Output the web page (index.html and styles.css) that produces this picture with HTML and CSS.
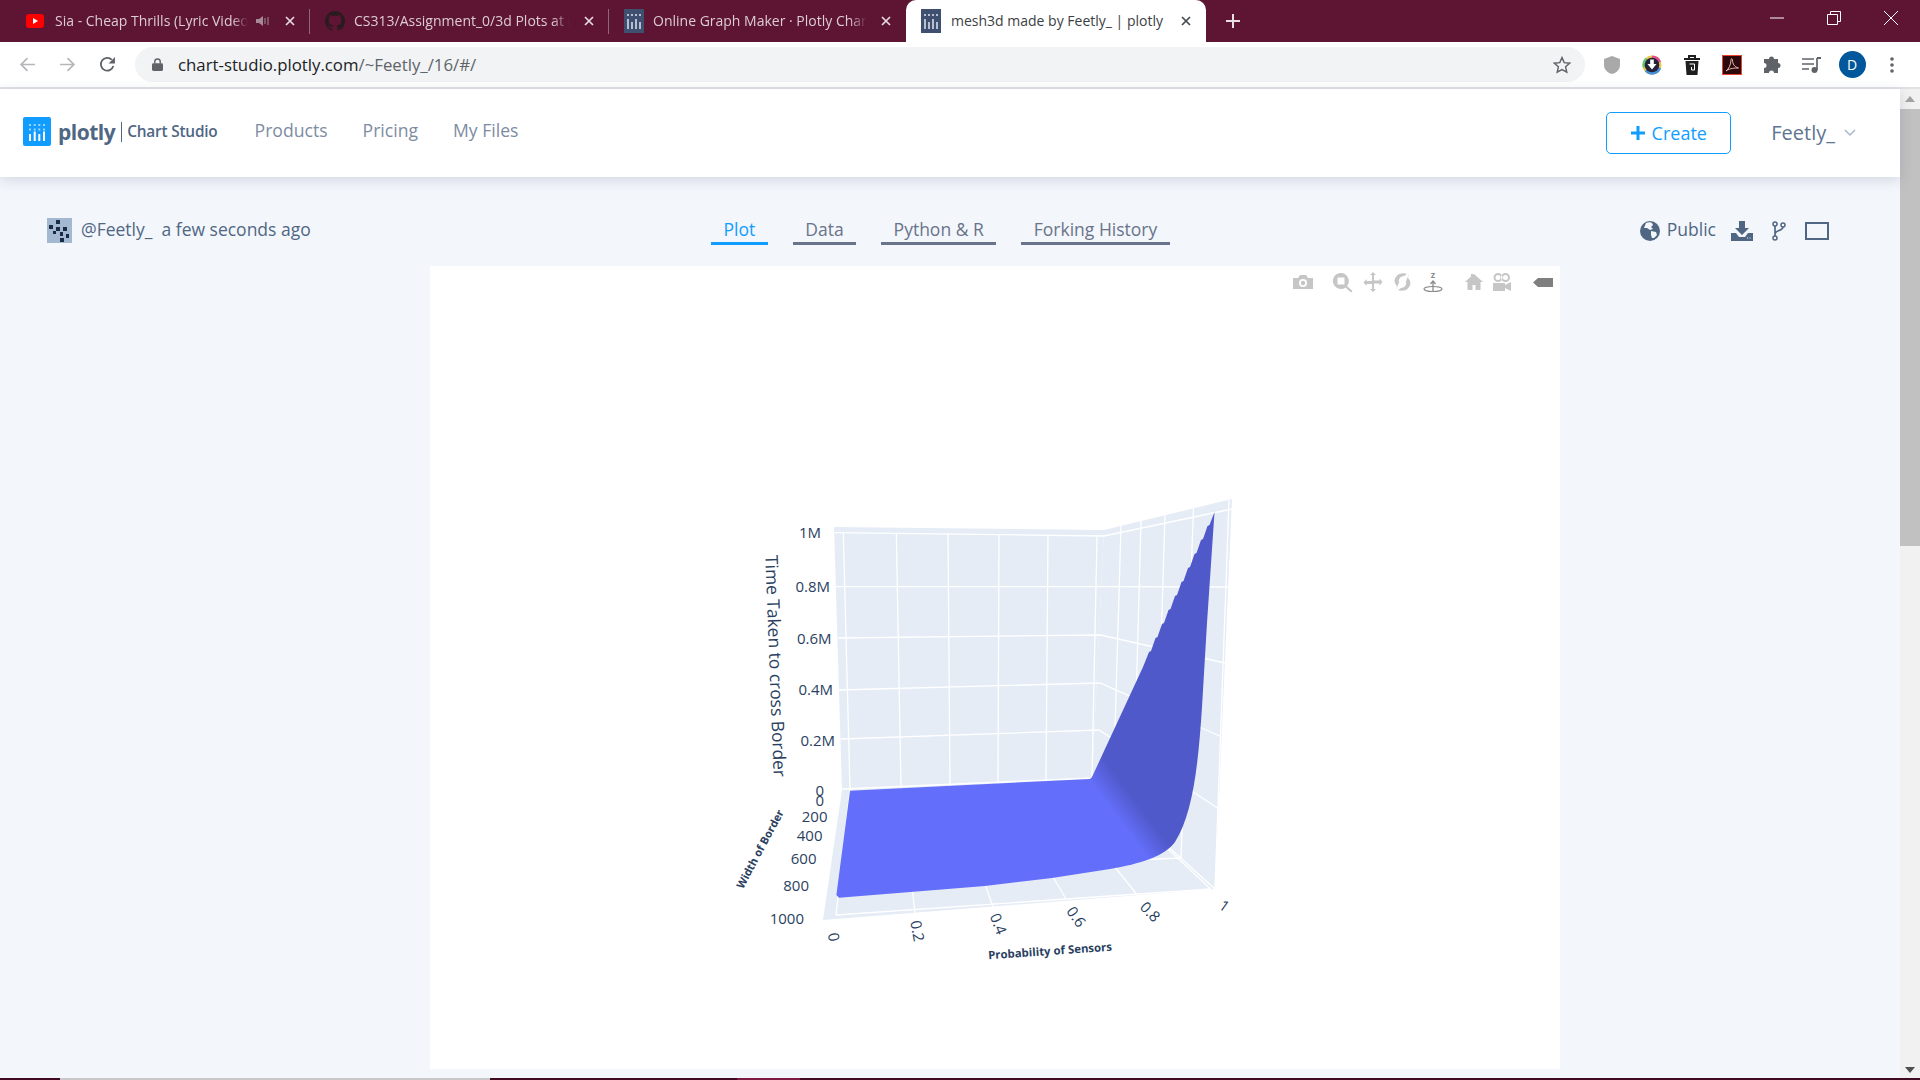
FILE: index.html
```html
<!DOCTYPE html>
<html lang="en">
<head>
<meta charset="utf-8">
<title>mesh3d made by Feetly_ | plotly</title>
<link rel="stylesheet" href="styles.css">
</head>
<body>
<div class="window">
  <div class="tabstrip">
    <div class="tab">
      <svg class="favicon" viewBox="0 0 18 14"><rect width="18" height="14" rx="3" fill="#f00"/><path d="M7 4l5 3-5 3z" fill="#fff"/></svg>
      <span class="tab-title">Sia - Cheap Thrills (Lyric Video)</span>
      <svg class="tab-audio" viewBox="0 0 14 12"><path d="M0 4h3l4-3v10L3 8H0z" fill="#a58a96"/><path d="M9 3v6M12 2v8" stroke="#8a6577" stroke-width="1.5"/></svg>
      <svg class="tab-close" viewBox="0 0 10 10"><path d="M1 1l8 8M9 1l-8 8" stroke="#e6dbe0" stroke-width="1.7"/></svg>
    </div>
    <div class="tab tab-sep">
      <svg class="favicon fav-gh" viewBox="0 0 16 16"><path fill="#2a1b20" d="M8 0C3.58 0 0 3.58 0 8c0 3.54 2.29 6.53 5.47 7.59.4.07.55-.17.55-.38 0-.19-.01-.82-.01-1.49-2.01.37-2.53-.49-2.69-.94-.09-.23-.48-.94-.82-1.13-.28-.15-.68-.52-.01-.53.63-.01 1.08.58 1.23.82.72 1.21 1.87.87 2.33.66.07-.52.28-.87.51-1.07-1.78-.2-3.64-.89-3.64-3.95 0-.87.31-1.59.82-2.15-.08-.2-.36-1.02.08-2.12 0 0 .67-.21 2.2.82.64-.18 1.32-.27 2-.27.68 0 1.36.09 2 .27 1.53-1.04 2.2-.82 2.2-.82.44 1.1.16 1.92.08 2.12.51.56.82 1.27.82 2.15 0 3.07-1.87 3.75-3.65 3.95.29.25.54.73.54 1.48 0 1.07-.01 1.93-.01 2.2 0 .21.15.46.55.38A8.013 8.013 0 0016 8c0-4.42-3.58-8-8-8z"/></svg>
      <span class="tab-title">CS313/Assignment_0/3d Plots at master</span>
      <svg class="tab-close" viewBox="0 0 10 10"><path d="M1 1l8 8M9 1l-8 8" stroke="#e6dbe0" stroke-width="1.7"/></svg>
    </div>
    <div class="tab tab-sep tab-third">
      <svg class="favicon fav-plotly" viewBox="0 0 20 24"><rect width="20" height="24" fill="#3f4f70"/><path d="M4 5v2M8 5v2M12 5v2M16 5v2M4 10v10M8 13v7M12 10v10M16 13v7" stroke="#dfe6ef" stroke-width="1.500"/></svg>
      <span class="tab-title">Online Graph Maker · Plotly Chart Studio</span>
      <svg class="tab-close" viewBox="0 0 10 10"><path d="M1 1l8 8M9 1l-8 8" stroke="#e6dbe0" stroke-width="1.7"/></svg>
    </div>
    <div class="tab tab-active">
      <svg class="favicon fav-plotly" viewBox="0 0 20 24"><rect width="20" height="24" fill="#3f4f70"/><path d="M4 5v2M8 5v2M12 5v2M16 5v2M4 10v10M8 13v7M12 10v10M16 13v7" stroke="#dfe6ef" stroke-width="1.500"/></svg>
      <span class="tab-title tab-title-active">mesh3d made by Feetly_ | plotly</span>
      <svg class="tab-close" viewBox="0 0 10 10"><path d="M1 1l8 8M9 1l-8 8" stroke="#45494d" stroke-width="1.700"/></svg>
    </div>
    <svg class="newtab" viewBox="0 0 14 14"><path d="M7 0v14M0 7h14" stroke="#e8dfe3" stroke-width="2"/></svg>
    <div class="winctrls">
      <svg class="winbtn" viewBox="0 0 14 14"><path d="M0 7h14" stroke="#fff" stroke-width="1"/></svg>
      <svg class="winbtn" viewBox="0 0 14 14"><path d="M.5 3.500h10v10H.5zM3.500 3.500V.5h10v10h-3" fill="none" stroke="#fff" stroke-width="1"/></svg>
      <svg class="winbtn" viewBox="0 0 14 14"><path d="M0 0l14 14M14 0L0 14" stroke="#fff" stroke-width="1"/></svg>
    </div>
  </div>

  <div class="toolbar">
    <div class="navslot"><svg class="navicon" viewBox="0 0 16 16"><path d="M15 8H2M8 2L2 8l6 6" fill="none" stroke="#b4b6b9" stroke-width="1.600"/></svg></div>
    <div class="navslot"><svg class="navicon" viewBox="0 0 16 16"><path d="M1 8h13M8 2l6 6-6 6" fill="none" stroke="#b4b6b9" stroke-width="1.600"/></svg></div>
    <div class="navslot"><svg class="navicon" viewBox="0 0 16 16"><path d="M13.500 9.500A6 6 0 1 1 12 3.500" fill="none" stroke="#5f6368" stroke-width="1.700"/><path d="M15 1v6H9z" fill="#5f6368"/></svg></div>
    <div class="omnibox">
      <svg class="lock" viewBox="0 0 12 14"><path d="M3 6V4a3 3 0 0 1 6 0v2" fill="none" stroke="#5f6368" stroke-width="1.500"/><rect y="5.500" width="12" height="8.500" rx="1.500" fill="#5f6368"/></svg>
      <span class="url">chart-studio.plotly.com<span class="url-path">/~Feetly_/16/#/</span></span>
      <svg class="star" viewBox="0 0 20 20"><path d="M10 1.800l2.500 5.600 6 .6-4.500 4 1.300 6L10 15l-5.300 3 1.300-6-4.500-4 6-.6z" fill="none" stroke="#5f6368" stroke-width="1.600"/></svg>
    </div>
    <div class="extensions">
      <div class="extslot"><svg class="exticon" viewBox="0 0 20 20"><path d="M10 1l8 3v6c0 5-4 8-8 9-4-1-8-4-8-9V4z" fill="#a9a9a9"/></svg></div>
      <div class="extslot"><svg class="exticon" viewBox="0 0 22 22"><circle cx="11" cy="11" r="10.500" fill="#e6c84a"/><path d="M11 .5a10.500 10.500 0 0 1 10 7L11 11z" fill="#e0518c"/><path d="M21 14.500A10.500 10.500 0 0 1 3 18l8-7z" fill="#4a90d9"/><path d="M1 14a10.500 10.500 0 0 1 3-11l7 8z" fill="#5fc46b"/><circle cx="11" cy="11" r="8" fill="#26223a"/><path d="M9 5h4v5h3l-5 6-5-6h3z" fill="#fff"/></svg></div>
      <div class="extslot"><svg class="exticon" viewBox="0 0 18 20"><path d="M1 4h16M6 3V1h6v2" fill="none" stroke="#1f1f1f" stroke-width="2"/><path d="M2.500 6h13l-1 14h-11z" fill="#1f1f1f"/><path d="M6.500 9h5v6h-3v-3" fill="none" stroke="#fff" stroke-width="1"/></svg></div>
      <div class="extslot"><svg class="exticon" viewBox="0 0 20 20"><rect x=".5" y=".5" width="19" height="19" fill="#2c0a0c" stroke="#e8432e"/><path d="M4 16c3-2 5-7 5-11 0-2 1.500-1.500 1.500 0 0 4 2 7 6 8-4 0-8 0-12.500 3z" fill="none" stroke="#e9b7b0" stroke-width="1"/></svg></div>
      <div class="extslot"><svg class="exticon" viewBox="0 0 20 20"><path d="M7 4a2.500 2.500 0 0 1 5 0h4v4a2.500 2.500 0 0 1 0 5v5h-4a2.500 2.500 0 0 0-5 0H2v-5a2.500 2.500 0 0 0 0-5V4z" fill="#5f6368"/></svg></div>
      <div class="extslot"><svg class="exticon" viewBox="0 0 20 18"><path d="M0 3h12M0 8h12M0 13h7" stroke="#5f6368" stroke-width="1.700"/><path d="M15 2v12" stroke="#5f6368" stroke-width="1.700"/><path d="M15 2h4" stroke="#5f6368" stroke-width="2"/><circle cx="12.500" cy="14" r="3" fill="#5f6368"/></svg></div>
      <div class="extslot"><span class="avatar-d">D</span></div>
      <div class="extslot"><svg class="menu-dots" viewBox="0 0 4 16"><circle cx="2" cy="2" r="1.800" fill="#5f6368"/><circle cx="2" cy="8" r="1.800" fill="#5f6368"/><circle cx="2" cy="14" r="1.800" fill="#5f6368"/></svg></div>
    </div>
  </div>

  <div class="viewport">
    <div class="page">
      <header class="site-header">
        <div class="brand">
          <svg class="logo-mark" viewBox="0 0 28 29"><rect width="28" height="29" rx="2" fill="#119dff"/><path d="M7 7v2M11.700 7v2M16.300 7v2M21 7v2M7 11.500v2M11.700 11.500v2M16.300 11.500v2M21 11.500v2" stroke="#9bd6ff" stroke-width="2"/><path d="M7 17v7M11.700 14.500V24M16.300 17v7M21 14.500V24" stroke="#fff" stroke-width="2"/></svg>
          <span class="logo-word">plotly</span>
          <span class="logo-bar"></span>
          <span class="logo-sub">Chart Studio</span>
        </div>
        <nav class="site-nav">
          <a class="site-link">Products</a>
          <a class="site-link">Pricing</a>
          <a class="site-link">My Files</a>
        </nav>
        <button class="create-btn"><svg class="create-plus" viewBox="0 0 14 14"><path d="M7 0v14M0 7h14" stroke="#119dff" stroke-width="3"/></svg>Create</button>
        <span class="user-name">Feetly_</span>
        <svg class="user-chev" viewBox="0 0 12 8"><path d="M1 1l5 5 5-5" fill="none" stroke="#a9b7ca" stroke-width="1.500"/></svg>
      </header>

      <div class="subbar">
        <div class="owner">
          <svg class="owner-pic" viewBox="0 0 25 25" shape-rendering="crispEdges"><rect width="25" height="25" fill="#a3b9d1"/><path d="M2 7h3.500v3.500H2zM9 2h3.500v3.500H9zM9 9h3.500v3.500H9zM5.500 12.500H9V16H5.500zM16 9h3.500v3.500H16zM12.500 14H16v3.500h-3.500zM19 16h3v3.500h-3zM13 20h4v3.500h-4z" fill="#1d2b42"/></svg>
          <span class="owner-name">@Feetly_</span>
          <span class="owner-time">a few seconds ago</span>
        </div>
        <div class="plot-tabs">
          <span class="plot-tab plot-tab-on">Plot</span>
          <span class="plot-tab">Data</span>
          <span class="plot-tab">Python &amp; R</span>
          <span class="plot-tab">Forking History</span>
        </div>
        <div class="plot-actions">
          <svg class="act-globe" viewBox="0 0 20 20"><circle cx="10" cy="10" r="10" fill="#506784"/><path d="M6 2c2-1 5-1 6 0l1 2-2 2 2 2-3 1-3-2-3 0zM11 10l5 1 1 3-3 3-2 0-1-3z" fill="#f3f6fb"/></svg>
          <span class="act-public">Public</span>
          <svg class="act-dl" viewBox="0 0 22 20"><path d="M8 0h6v7h4l-7 7-7-7h4z" fill="#506784"/><path d="M0 12h5l3 4h6l3-4h5v8H0z" fill="#506784"/><path d="M16 17h1M18.500 17h1" stroke="#f3f6fb"/></svg>
          <svg class="act-fork" viewBox="0 0 14 20"><circle cx="3" cy="3" r="2" fill="none" stroke="#506784" stroke-width="1.500"/><circle cx="11" cy="4" r="2" fill="none" stroke="#506784" stroke-width="1.500"/><circle cx="3" cy="17" r="2" fill="none" stroke="#506784" stroke-width="1.500"/><path d="M3 5v10M11 6c0 4-8 3-8 7" fill="none" stroke="#506784" stroke-width="1.700"/></svg>
          <span class="act-box"></span>
        </div>
      </div>

      <div class="plot-card">
        <svg class="plot-svg" viewBox="430 266 1130 803">
          <g class="modebar">
            <path d="M1293 278h5l2-3h6l2 3h5v11h-20z"/><circle cx="1303" cy="283" r="4" fill="#fff"/><circle cx="1303" cy="283" r="2.200"/>
            <path fill-rule="evenodd" d="M1341 273a8 8 0 0 1 6 13l5.500 5-1.500 1.500-5.500-5A8 8 0 1 1 1341 273zM1337.500 277.500v7h7v-7z"/>
            <path d="M1373 272l3 3h-2v5.500h5.500v-2l3 3.500-3 3.500v-2H1374v5.500h2l-3 3-3-3h2V284h-5.500v2l-3-3.500 3-3.500v2h5.500V275h-2z"/>
            <path d="M1396 290l1-4c-3-3-4-8 2-12 3-1 6-1 8 0l-3 2c-3 0-6 3-5 6l1-2zM1409 274l-1 4c3 3 4 8-2 12-3 1-6 1-8 0l3-2c3 0 6-3 5-6l-1 2z"/>
            <g class="orbit"><text x="1433" y="278" class="orbit-z">z</text><path d="M1433 291v-10M1430.500 284l2.500-3 2.500 3" fill="none" stroke="#8c8c8c" stroke-width="1.300"/><ellipse cx="1433" cy="289" rx="9" ry="2.500" fill="none" stroke="#8c8c8c" stroke-width="1.200"/></g>
            <path d="M1474 274l9 8h-2.500v8h-5v-5h-3v5h-5v-8h-2.500l6-5.500V274h2v1z"/>
            <path d="M1493 283h12v2l6-3v9l-6-3v3h-12z"/><path fill-rule="evenodd" d="M1498 273a4.500 4.500 0 1 1 0 9 4.500 4.500 0 0 1 0-9zM1498 275a2.500 2.500 0 1 0 0 5 2.500 2.500 0 0 0 0-5zM1505.500 273a4.500 4.500 0 1 1 0 9 4.500 4.500 0 0 1 0-9zM1505.500 275a2.500 2.500 0 1 0 0 5 2.500 2.500 0 0 0 0-5z"/>
            <path class="mode-tag" d="M1538 278h15v9h-15l-5-4.500z"/>
          </g>

          <polygon class="wall" points="834,527 1104,530 1092,778 842,790"/>
          <polygon class="wall" points="1104,530 1232,499 1215,889 1092,778"/>
          <polygon class="wall" points="842,790 1092,778 1215,889 823,920"/>

          <g class="grid">
            <path d="M834 532.700L1104 536L1232 509"/>
            <path d="M836 586.700L1102 586.700L1229 587"/>
            <path d="M838 638L1100.500 635L1225 663"/>
            <path d="M839 690L1100 683L1222 737"/>
            <path d="M840.500 739L1099 730L1219 809"/>
            <path d="M842 789L1092 778L1215 889"/>
            <path d="M843.300 532.700L850 789"/>
            <path d="M896.300 533L901 787"/>
            <path d="M948 534L950 785"/>
            <path d="M999 535L998 782"/>
            <path d="M1048 535.500L1046 780"/>
            <path d="M1097 536L1092 778"/>
            <path d="M1121 526L1113 797"/>
            <path d="M1141 521L1133 815"/>
            <path d="M1165 515L1155 835"/>
            <path d="M1193.500 508L1181 858"/>
            <path d="M1229 500L1215 889"/>
            <path d="M836 915L850 789"/>
            <path d="M915 913L901 787"/>
            <path d="M993 906.700L950 785"/>
            <path d="M1066 899L998 782"/>
            <path d="M1138 896L1046 780"/>
            <path d="M1210.700 889L1092 778"/>
            <path d="M836 915L1210.700 889"/>
            <path d="M1181 858L842 872"/>
          </g>

          <defs>
            <linearGradient id="surfaceShade" gradientUnits="userSpaceOnUse" x1="1118" y1="818" x2="1138" y2="803">
              <stop offset="0" stop-color="#636efa"/>
              <stop offset="1" stop-color="#5059c9"/>
            </linearGradient>
          </defs>
          <path fill="url(#surfaceShade)" d="M850 790.700L1090 779L1092 777L1143 667L1149 652L1151 651L1155.500 638L1157.500 637L1162 624L1164 623L1168.500 610L1170.500 609L1175 596L1177 595L1181.500 582L1183.500 581L1188 568L1190 567L1194.500 554L1196.500 553L1201 540L1203 539L1207.500 526L1209.500 525L1214.500 512L1207 623L1202 707C1198 770 1192 815 1175 842C1165 856 1140 864 1110 869L1052 878L985 886L839 897.700L836.400 895z"/>

          <g class="ticks ticks-end">
            <text x="821" y="538">1M</text>
            <text x="830" y="592">0.8M</text>
            <text x="831.500" y="644">0.6M</text>
            <text x="833" y="695">0.4M</text>
            <text x="835" y="746">0.2M</text>
            <text x="824" y="796">0</text>
            <text x="824" y="806">0</text>
            <text x="827.500" y="822">200</text>
            <text x="822.500" y="841">400</text>
            <text x="816.500" y="864">600</text>
            <text x="809" y="891">800</text>
            <text x="804" y="924">1000</text>
          </g>
          <g class="ticks ticks-mid">
            <text transform="translate(833.500 937) rotate(80)" y="5">0</text>
            <text transform="translate(917 931) rotate(80)" y="5">0.2</text>
            <text transform="translate(998 924) rotate(68)" y="5">0.4</text>
            <text transform="translate(1076 917) rotate(55)" y="5">0.6</text>
            <text transform="translate(1150 912) rotate(45)" y="5">0.8</text>
            <text transform="translate(1224 906) rotate(35)" y="5">1</text>
          </g>
          <text class="axis-title axis-z" transform="translate(774.500 666) rotate(87.800)" y="5">Time Taken to cross Border</text>
          <text class="axis-title axis-small axis-w" transform="translate(760 849) rotate(-62)" y="4">Width of Border</text>
          <text class="axis-title axis-small" transform="translate(1050 951) rotate(-4)" y="4">Probability of Sensors</text>
        </svg>
      </div>
    </div>
    <div class="scrollbar">
      <svg class="scroll-arrow" viewBox="0 0 20 20"><path d="M5 13l5-6 5 6z" fill="#a3a3a3"/></svg>
      <div class="scroll-thumb"></div>
      <div class="scroll-rest"></div>
      <svg class="scroll-arrow" viewBox="0 0 20 20"><path d="M5 7l5 6 5-6z" fill="#505050"/></svg>
    </div>
  </div>

  <div class="taskbar-edge">
    <span class="edge edge-a"></span>
    <span class="edge edge-b"></span>
    <span class="edge edge-a edge-c"></span>
    <span class="edge edge-d"></span>
    <span class="edge edge-a edge-e"></span>
  </div>
</div>
</body>
</html>
```
FILE: styles.css
```css
* { box-sizing: border-box; }
html, body { margin: 0; padding: 0; height: 100%; overflow: hidden; }
body { font-family: "Open Sans", "Liberation Sans", sans-serif; background: #f3f6fb; }
.window { position: relative; width: 1920px; height: 1080px; display: flex; flex-direction: column; }

/* tab strip */
.tabstrip { height: 42px; background: #5e1433; display: flex; align-items: stretch; padding-left: 11px; }
.tab { width: 299px; height: 42px; display: flex; align-items: center; padding: 0 12px 0 15px; position: relative; }
.tab-sep::before { content: ""; position: absolute; left: -1px; top: 9px; height: 25px; width: 1px; background: #8f6878; }
.tab-third { width: 297px; }
.tab-active { width: 300px; background: #fff; border-radius: 10px 10px 0 0; }
.favicon { width: 18px; height: 14px; flex: none; }
.fav-gh { width: 20px; height: 20px; }
.fav-plotly { width: 20px; height: 24px; }
.tab-title { flex: 1; min-width: 0; margin: -1px 0 0 11px; white-space: nowrap; overflow: hidden; font-size: 14px; line-height: 20px; color: #dccdd3; -webkit-mask-image: linear-gradient(90deg, #000 92%, transparent); mask-image: linear-gradient(90deg, #000 92%, transparent); }
.tab-sep .tab-title { margin-left: 9px; margin-right: 5px; }
.tab-title-active { color: #3c4043; -webkit-mask-image: none; mask-image: none; margin-left: 10px; }
.tab-audio { width: 14px; height: 12px; flex: none; margin: 0 6px 0 8px; }
.tab-close { width: 10px; height: 10px; flex: none; margin-left: 9px; margin-right: 3px; }
.newtab { width: 14px; height: 14px; align-self: center; margin-left: 20px; }
.winctrls { margin-left: auto; display: flex; align-items: flex-start; padding-right: 22px; gap: 43px; padding-top: 11px; }
.winbtn { width: 14px; height: 14px; display: block; }

/* toolbar */
.toolbar { height: 47px; background: #fff; border-bottom: 2px solid #dfe1e5; padding: 5px 8px 0 7px; display: flex; align-items: flex-start; }
.navslot { width: 40px; height: 35px; display: flex; align-items: center; justify-content: center; flex: none; }
.navicon { width: 17px; height: 17px; }
.omnibox { width: 1450px; height: 35px; margin-left: 8px; flex: none; background: #f1f3f4; border-radius: 18px; display: flex; align-items: center; padding: 0 14px 0 17px; }
.lock { width: 11px; height: 13px; flex: none; }
.url { margin-left: 15px; font-size: 16.800px; color: #202124; white-space: nowrap; }
.url-path { color: #5f6368; }
.star { width: 18px; height: 18px; margin-left: auto; }
.extensions { display: flex; margin-left: 7px; }
.extslot { width: 40px; height: 35px; display: flex; align-items: center; justify-content: center; }
.exticon { width: 20px; height: 20px; }
.avatar-d { width: 27px; height: 27px; border-radius: 50%; background: #01579b; color: #fff; font-size: 14px; display: flex; align-items: center; justify-content: center; }
.menu-dots { width: 4px; height: 16px; }

/* page */
.viewport { flex: 1; min-height: 0; display: flex; }
.page { width: 1900px; flex: none; background: #f3f6fb; position: relative; }
.site-header { height: 88px; background: #fff; box-shadow: 0 3px 12px rgba(60, 80, 110, .18); display: flex; align-items: center; padding-left: 23px; position: relative; }
.brand { display: flex; align-items: center; margin-top: -3px; }
.logo-mark { width: 28px; height: 29px; flex: none; }
.logo-word { margin-left: 7px; font-size: 21px; font-weight: 700; color: #506784; letter-spacing: -.5px; }
.logo-bar { width: 1px; height: 20px; background: #506784; margin-left: 6px; }
.logo-sub { margin-left: 5px; font-size: 15.400px; font-weight: 600; color: #506784; letter-spacing: -.2px; }
.site-nav { display: flex; gap: 35px; margin-left: 37px; margin-top: -6px; }
.site-link { font-size: 17.600px; color: #7d8ca3; }
.create-btn { margin-left: auto; width: 125px; height: 42px; border: 1px solid #119dff; border-radius: 5px; background: #fff; color: #119dff; font: 400 18px "Open Sans", sans-serif; display: flex; align-items: center; justify-content: center; gap: 7px; padding: 0; }
.create-plus { width: 14px; height: 14px; }
.user-name { margin: -2px 0 0 40px; font-size: 20px; color: #607591; }
.user-chev { width: 12px; height: 8px; margin-left: 9px; margin-right: 44px; }

.subbar { height: 89px; display: flex; align-items: flex-start; padding-top: 41px; position: relative; }
.owner { display: flex; align-items: center; padding-left: 47px; width: 711px; flex: none; color: #506784; font-size: 17.500px; height: 25px; }
.owner-pic { width: 25px; height: 25px; flex: none; }
.owner-name { margin: -4px 0 0 9px; }
.owner-time { margin: -4px 0 0 9px; }
.plot-tabs { display: flex; gap: 25px; margin-top: -1px; }
.plot-tab { font-size: 17.500px; line-height: 25px; color: #69738a; padding: 0 12.500px; border-bottom: 3px solid #69738a; }
.plot-tab-on { color: #119dff; border-color: #119dff; }
.plot-actions { margin-left: auto; display: flex; align-items: center; height: 25px; padding-right: 71px; color: #506784; font-size: 17.500px; }
.act-globe { width: 20px; height: 20px; }
.act-public { margin-left: 7px; margin-top: -3px; }
.act-dl { width: 22px; height: 20px; margin-left: 15px; }
.act-fork { width: 14px; height: 20px; margin-left: 19px; }
.act-box { width: 24px; height: 18px; border: 2px solid #506784; margin-left: 19px; }

.plot-card { width: 1130px; height: 803px; margin-left: 430px; background: #fff; }
.plot-svg { display: block; width: 1130px; height: 803px; font-family: "Open Sans", sans-serif; }
.modebar { fill: #c6c6c6; }
.mode-tag { fill: #7f7f7f; }
.orbit-z { font-size: 9px; font-weight: 700; text-anchor: middle; fill: #8c8c8c; }
.wall { fill: #e5ecf6; }
.grid path { fill: none; stroke: #fff; stroke-width: 1.300; }
.ticks { font-size: 15px; fill: #2a3f5f; }
.ticks-end { text-anchor: end; }
.ticks-mid { text-anchor: middle; }
.axis-title { text-anchor: middle; fill: #2a3f5f; }
.axis-z { font-size: 17.400px; }
.axis-small { font-size: 11.400px; font-weight: 700; }
.axis-w { font-size: 11px; }

/* scrollbar */
.scrollbar { width: 20px; flex: none; background: #f1f1f1; display: flex; flex-direction: column; }
.scroll-arrow { width: 20px; height: 20px; flex: none; }
.scroll-thumb { height: 437px; background: #c1c1c1; flex: none; }
.scroll-rest { flex: 1; }

/* sliver of the taskbar along the bottom edge */
.taskbar-edge { position: absolute; left: 0; right: 0; bottom: 0; height: 2px; display: flex; }
.edge { display: block; height: 2px; }
.edge-a { width: 60px; background: #3f0a22; }
.edge-b { width: 430px; background: #c8c8c8; }
.edge-c { width: 247px; }
.edge-d { width: 63px; background: #7d1a44; }
.edge-e { flex: 1; }
```
